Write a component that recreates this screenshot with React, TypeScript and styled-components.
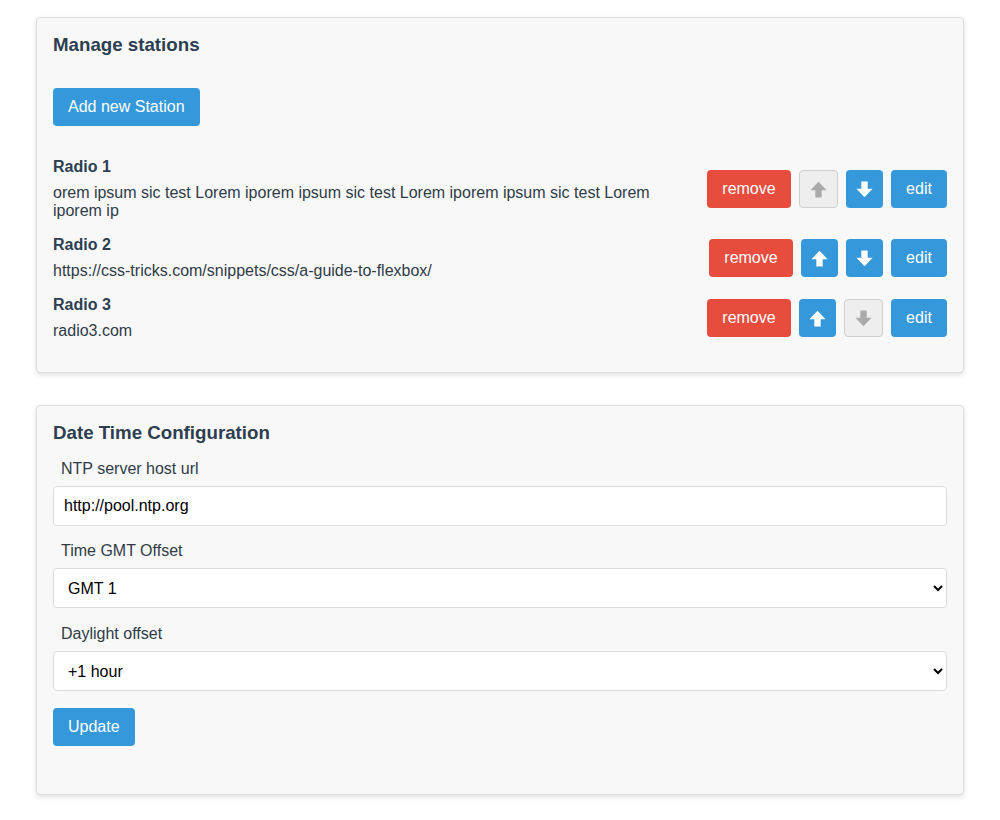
import React, { FC, useState } from 'react';
import styled, { createGlobalStyle } from 'styled-components';

const GlobalStyle = createGlobalStyle`
  body {
    margin: 0;
    background: #fff;
    font-family: "Liberation Sans", Arial, sans-serif;
    color: #2c3e50;
  }
`;

const Page = styled.div`
  padding: 17px 36px 24px 36px;
  display: flex;
  flex-direction: column;
  gap: 32px;
`;

const Card = styled.section<{ $bottom: number }>`
  background: #f8f8f8;
  border: 1px solid #dedede;
  border-radius: 4px;
  box-shadow: 0 2px 5px rgba(0, 0, 0, 0.12);
  padding: 16px 16px ${(p) => p.$bottom}px 16px;
`;

const Title = styled.h3`
  margin: 0;
  font-size: 18.72px;
  line-height: 22px;
  font-weight: bold;
  color: #2c3e50;
`;

const Button = styled.button<{ $variant: 'primary' | 'danger' | 'disabled' }>`
  height: 38px;
  padding: 0 15px;
  border-radius: 4px;
  font-family: "Liberation Sans", Arial, sans-serif;
  font-size: 16px;
  color: #fff;
  border: ${(p) => (p.$variant === 'disabled' ? '1px solid #cfcfcf' : 'none')};
  background: ${(p) =>
    p.$variant === 'danger' ? '#e74c3c' : p.$variant === 'disabled' ? '#eeeeee' : '#3498db'};
  cursor: ${(p) => (p.$variant === 'disabled' ? 'default' : 'pointer')};
  display: inline-flex;
  align-items: center;
  justify-content: center;
`;

const IconButton = styled(Button)`
  width: ${(p) => (p.$variant === 'disabled' ? 39 : 37)}px;
  padding: 0;
  color: ${(p) => (p.$variant === 'disabled' ? '#aaaaaa' : '#fff')};
`;

const AddButton = styled(Button)`
  margin-top: 32px;
`;

const StationList = styled.div`
  margin-top: 32px;
  display: flex;
  flex-direction: column;
  gap: 16px;
`;

const StationRow = styled.div`
  display: flex;
  align-items: center;
  gap: 16px;
`;

const StationInfo = styled.div`
  flex: 1;
  min-width: 0;
`;

const StationName = styled.div`
  font-weight: bold;
  font-size: 16px;
  line-height: 18px;
  color: #2c3e50;
`;

const StationUrl = styled.div`
  margin-top: 8px;
  font-size: 16px;
  line-height: 18px;
  color: #2f3b47;
  padding-right: 40px;
`;

const Actions = styled.div`
  display: flex;
  gap: 8px;
  flex-shrink: 0;
`;

const Field = styled.div<{ $top: number }>`
  margin-top: ${(p) => p.$top}px;
`;

const Label = styled.label`
  display: block;
  padding-left: 8px;
  font-size: 16px;
  line-height: 18px;
  margin-bottom: 8px;
  color: #2f3b47;
`;

const TextInput = styled.input`
  box-sizing: border-box;
  width: 100%;
  height: 40px;
  padding: 0 10px;
  border: 1px solid #dcdcdc;
  border-radius: 4px;
  background: #fff;
  font-family: "Liberation Sans", Arial, sans-serif;
  font-size: 16px;
  color: #000;
  outline: none;
`;

const Select = styled.select`
  box-sizing: border-box;
  width: 100%;
  height: 40px;
  padding: 0 6px 0 10px;
  border: 1px solid #dcdcdc;
  border-radius: 4px;
  background: #fff;
  font-family: "Liberation Sans", Arial, sans-serif;
  font-size: 16px;
  color: #000;
  outline: none;
`;

const UpdateButton = styled(Button)`
  margin-top: 17px;
`;

const Arrow: FC<{ down?: boolean }> = ({ down }) => (
  <svg width="17" height="17" viewBox="0 0 16 16" style={{ transform: down ? 'rotate(180deg)' : undefined }}>
    <path d="M8 0.8 L15.6 8.6 L11 8.6 L11 15.6 L5 15.6 L5 8.6 L0.4 8.6 Z" fill="currentColor" strokeLinejoin="round" />
  </svg>
);

type Station = { name: string; url: string };

const stations: Station[] = [
  {
    name: 'Radio 1',
    url: 'orem ipsum sic test Lorem iporem ipsum sic test Lorem iporem ipsum sic test Lorem iporem ip',
  },
  { name: 'Radio 2', url: 'https://css-tricks.com/snippets/css/a-guide-to-flexbox/' },
  { name: 'Radio 3', url: 'radio3.com' },
];

const App: FC = () => {
  const [ntp, setNtp] = useState('http://pool.ntp.org');
  const [gmt, setGmt] = useState('1');
  const [dst, setDst] = useState('1');

  return (
    <>
      <GlobalStyle />
      <Page>
        <Card $bottom={32}>
          <Title>Manage stations</Title>
          <AddButton $variant='primary'>Add new Station</AddButton>
          <StationList>
            {stations.map((s, i) => (
              <StationRow key={s.name}>
                <StationInfo>
                  <StationName>{s.name}</StationName>
                  <StationUrl>{s.url}</StationUrl>
                </StationInfo>
                <Actions>
                  <Button $variant='danger' style={{ width: 84 }}>remove</Button>
                  <IconButton $variant={i === 0 ? 'disabled' : 'primary'}>
                    <Arrow />
                  </IconButton>
                  <IconButton $variant={i === stations.length - 1 ? 'disabled' : 'primary'}>
                    <Arrow down />
                  </IconButton>
                  <Button $variant='primary' style={{ width: 56 }}>edit</Button>
                </Actions>
              </StationRow>
            ))}
          </StationList>
        </Card>

        <Card $bottom={48}>
          <Title>Date Time Configuration</Title>
          <Field $top={16}>
            <Label>NTP server host url</Label>
            <TextInput value={ntp} onChange={(e) => setNtp(e.target.value)} />
          </Field>
          <Field $top={16}>
            <Label>Time GMT Offset</Label>
            <Select value={gmt} onChange={(e) => setGmt(e.target.value)}>
              <option value='0'>GMT 0</option>
              <option value='1'>GMT 1</option>
              <option value='2'>GMT 2</option>
            </Select>
          </Field>
          <Field $top={17}>
            <Label>Daylight offset</Label>
            <Select value={dst} onChange={(e) => setDst(e.target.value)}>
              <option value='0'>0 hour</option>
              <option value='1'>+1 hour</option>
            </Select>
          </Field>
          <UpdateButton $variant='primary'>Update</UpdateButton>
        </Card>
      </Page>
    </>
  );
};

export default App;
